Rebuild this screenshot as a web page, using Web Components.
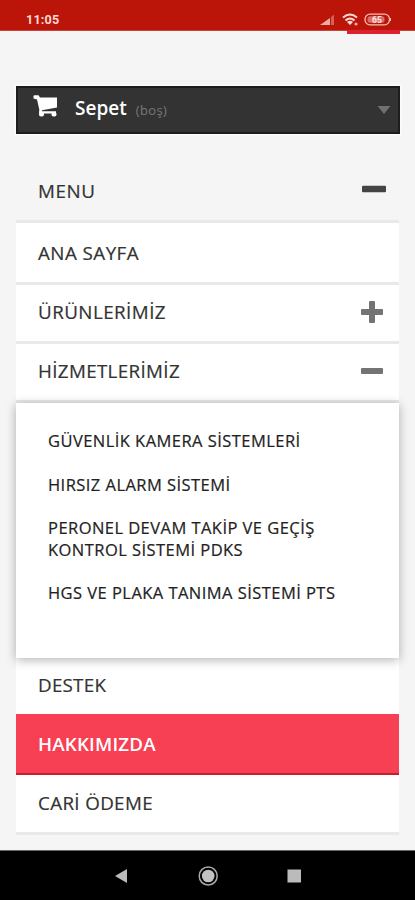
<!DOCTYPE html>
<html lang="tr"><head><meta charset="utf-8"><title>Menu</title>
<style>
html,body{margin:0;height:100%}
body{background:#f5f5f5;font-family:"Open Sans","Noto Sans",sans-serif;overflow:hidden}
</style></head><body>
<phone-screen>
<status-bar slot="status">11:05</status-bar>
<cart-bar><span slot="note">(boş)</span>Sepet</cart-bar>
<menu-list>
<menu-row kind="head" sign="minus" style="--h:64px;--base:1px;--ls:.6px">MENU</menu-row>
<menu-row style="--h:62px;--base:0px">ANA SAYFA</menu-row>
<menu-row sign="plus" style="--h:59px;--base:-1px">ÜRÜNLERİMİZ</menu-row>
<menu-row sign="minus" style="--h:59px;--base:-1px;--ls:.35px">HİZMETLERİMİZ</menu-row>
<sub-menu>
<sub-item>GÜVENLİK KAMERA SİSTEMLERİ</sub-item>
<sub-item>HIRSIZ ALARM SİSTEMİ</sub-item>
<sub-item>PERONEL DEVAM TAKİP VE GEÇİŞ<br>KONTROL SİSTEMİ PDKS</sub-item>
<sub-item>HGS VE PLAKA TANIMA SİSTEMİ PTS</sub-item>
</sub-menu>
<menu-row kind="last" style="--h:56px;--base:-1px;--ls:.25px">DESTEK</menu-row>
<menu-row kind="active" style="--h:61px;--base:0px;--ls:.15px">HAKKIMIZDA</menu-row>
<menu-row style="--h:60px;--base:-1px;--ls:.35px">CARİ ÖDEME</menu-row>
</menu-list>
<nav-bar slot="nav"></nav-bar>
</phone-screen>
<script>
const define=(name,html)=>customElements.define(name,class extends HTMLElement{
  constructor(){super();this.attachShadow({mode:'open'}).innerHTML=html;}
});
define('phone-screen',`<style>
:host{display:flex;flex-direction:column;height:900px;width:415px;background:#f5f5f5}
main{flex:1;padding:55px 16px 0;min-height:0}</style>
<slot name="status"></slot><main><slot></slot></main><slot name="nav"></slot>`);
define('status-bar',`<style>
:host{box-sizing:border-box;display:flex;justify-content:space-between;height:31px;background:#bb1409;border-bottom:1px solid #c8463e;color:#ffd9d3;font:700 12.6px/14px Roboto,sans-serif;padding:13px 23px 0 26px;position:relative}
span{letter-spacing:.2px}
svg{display:block;width:74px;height:14px}
i{position:absolute;left:347px;top:30px;width:53px;height:4px;background:#dc2231}
</style><span><slot></slot></span>
<svg viewBox="0 0 74 14"><path d="M2 12L12 5V12Z" fill="#efaaa3"/><path d="M13 4L16 1.500V12H13Z" fill="#d46159"/>
<g fill="none" stroke="#ffd9d3" stroke-width="2"><path d="M25 4.500Q32-1.500 39 4.500M27.500 7.500Q32 3.500 36.500 7.500"/></g><path d="M29 9Q32 6.500 35 9L32 12Z" fill="#ffd9d3"/><circle cx="38" cy="11" r="1.600" fill="#efaaa3"/>
<rect x="47" y="1.200" width="24.500" height="10.600" rx="5" fill="none" stroke="#f7bdb5" stroke-width="1.300"/><rect x="49.500" y="3.200" width="17" height="6.600" rx="2.500" fill="#d96f68"/><path d="M72.500 5v3" stroke="#f7bdb5"/>
<text x="59" y="9.700" text-anchor="middle" font-family="Roboto" font-weight="700" font-size="8.500" fill="#ffe7e3">65</text></svg><i></i>`);
define('cart-bar',`<style>
:host{box-sizing:border-box;display:flex;align-items:center;width:384px;height:48px;background:#333;border:2px solid #1d1d1d;box-shadow:0 0 2px 1px #fff;padding:0 7px 5px 15px;color:#fff;font-weight:600;font-size:19px;line-height:26px}
.cart{width:26px;height:23px;margin:0 16px 2px 0}
b{font-weight:600}
.note{color:#777;font-weight:400;font-size:13px;letter-spacing:.4px;margin:4px 0 0 9px}
.arrow{margin-left:auto;width:14px;height:8px;margin-top:4px}
</style><svg class="cart" viewBox="0 0 26 23"><path d="M.5 1.200Q.5.300 1.500.300H5.500L7 2.500H24V12.500L9 15.300V16.300H23V18.500H7Q6 18.500 6 17.500L6.300 14.500 4 4.500.5 3.500Z" fill="#fff"/><rect x="6" y="17" width="5" height="4.500" rx="2" fill="#fff"/><rect x="18.500" y="17" width="5" height="4.500" rx="2" fill="#fff"/></svg>
<b><slot></slot></b><span class="note"><slot name="note"></slot></span><svg class="arrow" viewBox="0 0 14 8"><path d="M.5 0H13.500L7 8Z" fill="#707070"/></svg>`);
define('menu-list',`<style>:host{display:block;width:383px;margin-top:25px}</style><slot></slot>`);
define('menu-row',`<style>
:host{box-sizing:border-box;display:flex;align-items:center;justify-content:space-between;height:var(--h);padding:0 16.5px 0 22px;background:#fff;border-bottom:3px solid #e9e9e9;color:#333;font-size:18.8px;line-height:24px;font-weight:500;letter-spacing:var(--ls,.45px);-webkit-text-stroke:.2px}
:host([kind=head]){background:#f5f5f5;padding-right:13px}
:host([kind=last]){border:0}
:host([kind=active]){background:#f74053;border-bottom:2px solid #c91d30;color:#fff;font-weight:600;-webkit-text-stroke:0}
span{margin-top:calc(var(--base)*2)}
svg{display:none;width:22px;height:22px;margin-top:calc(var(--base)*2 - 1px);fill:#747474}
:host([sign]) svg{display:block}
:host([sign=minus]) .v{display:none}
:host([kind=head]) svg{fill:#444;width:24px;height:24px;margin-top:-1px}
</style><span><slot></slot></span><svg viewBox="0 0 22 22"><rect x="0" y="8" width="22" height="6" rx="1"/><rect class="v" x="8" y="0" width="6" height="22" rx="1"/></svg>`);
define('sub-menu',`<style>:host{box-sizing:border-box;display:flex;flex-direction:column;gap:21.300px;height:255px;padding:27.4px 32px;background:#fff;box-shadow:0 2px 10px rgba(0,0,0,.3);position:relative}</style><slot></slot>`);
define('sub-item',`<style>:host{display:block;color:#222;font-size:16.5px;line-height:22px;font-weight:500;letter-spacing:.45px;-webkit-text-stroke:.2px;white-space:nowrap}</style><slot></slot>`);
define('nav-bar',`<style>:host{box-sizing:border-box;display:flex;align-items:center;justify-content:center;height:50px;background:#000;border-top:1px solid #666}svg{width:190px;height:22px;display:block}</style>
<svg viewBox="0 0 190 22"><path d="M2 11L14 4V18Z" fill="#bbb"/><circle cx="95.200" cy="11" r="9" fill="none" stroke="#aaa" stroke-width="1.500"/><circle cx="95.200" cy="11" r="6.300" fill="#c2c2c2"/><rect x="174.500" y="4.500" width="13.500" height="13" fill="#bbb"/></svg>`);
</script></body></html>
